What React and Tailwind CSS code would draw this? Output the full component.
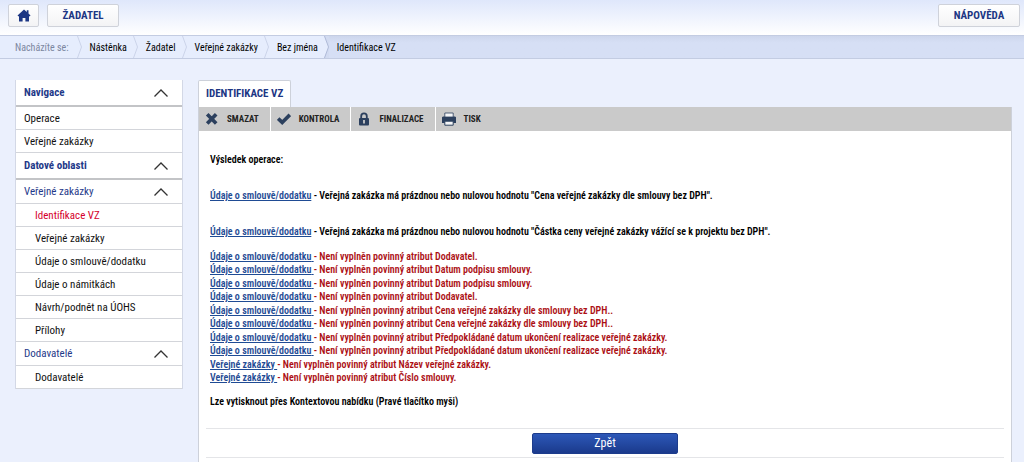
const crumbs = ["Nástěnka", "Žadatel", "Veřejné zakázky", "Bez jména"];

const contractItems = [
  "Identifikace VZ",
  "Veřejné zakázky",
  "Údaje o smlouvě/dodatku",
  "Údaje o námitkách",
  "Návrh/podnět na ÚOHS",
  "Přílohy",
];

const warnings = [
  'Veřejná zakázka má prázdnou nebo nulovou hodnotu "Cena veřejné zakázky dle smlouvy bez DPH".',
  'Veřejná zakázka má prázdnou nebo nulovou hodnotu "Částka ceny veřejné zakázky vážící se k projektu bez DPH".',
];

const errors = [
  ["Údaje o smlouvě/dodatku", "Dodavatel."],
  ["Údaje o smlouvě/dodatku", "Datum podpisu smlouvy."],
  ["Údaje o smlouvě/dodatku", "Datum podpisu smlouvy."],
  ["Údaje o smlouvě/dodatku", "Dodavatel."],
  ["Údaje o smlouvě/dodatku", "Cena veřejné zakázky dle smlouvy bez DPH.."],
  ["Údaje o smlouvě/dodatku", "Cena veřejné zakázky dle smlouvy bez DPH.."],
  ["Údaje o smlouvě/dodatku", "Předpokládané datum ukončení realizace veřejné zakázky."],
  ["Údaje o smlouvě/dodatku", "Předpokládané datum ukončení realizace veřejné zakázky."],
  ["Veřejné zakázky", "Název veřejné zakázky."],
  ["Veřejné zakázky", "Číslo smlouvy."],
];

const topButton =
  "flex h-[23px] items-center justify-center rounded-xs border border-[#cfd2da] bg-linear-to-b from-white to-[#f3f3f5] font-bold text-[#1c3684]";

function CrossIcon() {
  return (
    <svg viewBox="0 0 14 14" className="size-3.5" stroke="#2c405e" strokeWidth="3.6">
      <path d="M2.2 2.2 11.2 11.6M11.2 2.2 2.2 11.6" />
    </svg>
  );
}

function CheckIcon() {
  return (
    <svg viewBox="0 0 14 14" className="size-3.5" fill="none" stroke="#2c405e" strokeWidth="3.6">
      <path d="M1.2 6.6 5.2 10.4 12.8 2.8" />
    </svg>
  );
}

function LockIcon() {
  return (
    <svg viewBox="0 0 14 14" className="size-3.5" fill="none">
      <path d="M4.2 7V4.2a2.8 2.8 0 0 1 5.6 0V7" stroke="#2c405e" strokeWidth="1.8" />
      <rect x="2" y="6" width="10" height="7.4" rx="1" fill="#2c405e" />
      <path d="M7 8v3.4" stroke="#cacaca" strokeWidth="1.8" />
    </svg>
  );
}

function PrintIcon() {
  return (
    <svg viewBox="0 0 14 14" className="size-3.5" fill="#2c405e">
      <path d="M0 5.2 1 4.4H13l1 .8V11H0z" />
      <path d="M2.8 1h8.4v4H2.8z" fill="#f4f5f7" stroke="#2c405e" strokeWidth=".8" />
      <path d="M2.8 9.2h8.4v4H2.8z" fill="#f4f5f7" stroke="#2c405e" strokeWidth="1" />
    </svg>
  );
}

function Separator({ current }) {
  return (
    <svg viewBox="0 0 5 22" className="h-[22px] w-[5px]" fill="none">
      {current && <path d="M0 0 4.5 11 0 22H5V0z" fill="#d2dbf1" />}
      <path d="M0.5 0 4.5 11 0.5 22" stroke={current ? "#b0bbd8" : "#cbd4e9"} />
    </svg>
  );
}

function SectionHeader({ children, strong }) {
  return (
    <button
      type="button"
      className={`flex w-full items-center justify-between pr-3.5 pl-2 text-left text-[#1f3a8a] ${
        strong
          ? "h-[27px] border-b-2 border-[#c3c4c7] font-bold"
          : "h-6 border-b border-[#d3d5da]"
      }`}
    >
      {children}
      <svg viewBox="0 0 14 8" className="h-2 w-3.5" fill="none" stroke="#333" strokeWidth="1.3">
        <path d="M0.5 7.5 7 1l6.5 6.5" />
      </svg>
    </button>
  );
}

function NavItem({ children, nested, active }) {
  return (
    <a
      href="#"
      className={`flex h-[23px] items-center border-b border-[#d3d5da] pt-px ${
        nested ? "pl-[19px]" : "pl-2"
      } ${active ? "text-[#d5002b]" : "text-[#111]"}`}
    >
      {children}
    </a>
  );
}

function ToolButton({ icon, children, last }) {
  return (
    <button
      type="button"
      className={`flex h-6 items-center gap-2 pr-[11px] pl-1.5 ${
        last ? "" : "border-r border-white"
      }`}
    >
      {icon}
      {children}
    </button>
  );
}

function DataLink({ children }) {
  return (
    <a href="#" className="text-[#1f4b94] underline">
      {children}
    </a>
  );
}

export default function App() {
  return (
    <div className="flex min-h-screen flex-col bg-[#ebf0fd] font-['Roboto_Condensed',Roboto,sans-serif] text-[11px] leading-4 text-black">
      <header className="flex h-[35px] items-start justify-between bg-linear-to-b from-[#dfe7fb] to-white px-1 pt-1">
        <div className="flex gap-2 pl-1">
          <button type="button" aria-label="Domů" className={`${topButton} w-[31px]`}>
            <svg viewBox="0 0 14 13" className="h-[13px] w-[14px]" fill="#1c3684">
              <path d="M7 .5 .5 6.5l1 1L2 7v5.5h3.6V9h2.8v3.5H12V7l.5.5 1-1-2-1.9V1.3H9.8v1.8z" />
            </svg>
          </button>
          <button type="button" className={`${topButton} w-[72px]`}>
            ŽADATEL
          </button>
        </div>
        <button type="button" className={`${topButton} w-[82px]`}>
          NÁPOVĚDA
        </button>
      </header>

      <nav
        aria-label="Drobečková navigace"
        className="h-6 border-y border-[#c3cce2] bg-linear-to-b from-[#cdd6ec] to-[#d6dff5] to-30% text-[10px]"
      >
        <ol className="flex h-[22px] items-center leading-[18px]">
          <li className="flex items-center bg-[#e6edfd] pl-[15px] text-[#7c87a0]">
            <span className="pt-px pr-2">Nacházíte se:</span>
            <Separator />
          </li>
          {crumbs.map((label, i) => (
            <li key={label} className="flex items-center bg-[#e6edfd]">
              <a href="#" className="pt-px pr-1.5 pl-2">
                {label}
              </a>
              <Separator current={i === crumbs.length - 1} />
            </li>
          ))}
          <li className="pt-px pl-2">Identifikace VZ</li>
        </ol>
      </nav>

      <div className="flex grow gap-[15px] pt-[21px] pr-3 pl-[15px]">
        <aside className="w-[168px] shrink-0 self-start border-x border-[#d3d8e6] bg-white">
          <SectionHeader strong>Navigace</SectionHeader>
          <NavItem>Operace</NavItem>
          <NavItem>Veřejné zakázky</NavItem>
          <SectionHeader strong>Datové oblasti</SectionHeader>
          <SectionHeader>Veřejné zakázky</SectionHeader>
          {contractItems.map((item, i) => (
            <NavItem key={item} nested active={i === 0}>
              {item}
            </NavItem>
          ))}
          <SectionHeader>Dodavatelé</SectionHeader>
          <NavItem nested>Dodavatelé</NavItem>
        </aside>

        <main className="flex min-w-0 grow flex-col">
          <h1 className="flex h-[27px] w-fit items-center rounded-t-xs border border-b-0 border-[#cdd1da] bg-white px-[7px] font-bold text-[#1c3684]">
            IDENTIFIKACE VZ
          </h1>
          <div className="grow border-x border-[#cdd1da] bg-white">
            <div className="flex h-6 bg-[#cacaca] text-[9px] font-bold text-[#222]">
              <ToolButton icon={<CrossIcon />}>SMAZAT</ToolButton>
              <ToolButton icon={<CheckIcon />}>KONTROLA</ToolButton>
              <ToolButton icon={<LockIcon />}>FINALIZACE</ToolButton>
              <ToolButton icon={<PrintIcon />} last>
                TISK
              </ToolButton>
            </div>

            <div className="px-[11px] pt-[21px] text-[10px] font-semibold">
              <p>Výsledek operace:</p>
              {warnings.map((text) => (
                <p key={text} className="mt-5">
                  <DataLink>Údaje o smlouvě/dodatku</DataLink> - {text}
                </p>
              ))}
              <ul className="mt-2.5 flex h-[134px] flex-col justify-between leading-[13px] text-[#ac0f14]">
                {errors.map(([link, attribute], i) => (
                  <li key={i}>
                    <DataLink>{link} </DataLink>- Není vyplněn povinný atribut {attribute}
                  </li>
                ))}
              </ul>
              <p className="mt-2.5">Lze vytisknout přes Kontextovou nabídku (Pravé tlačítko myši)</p>
            </div>

            <div className="mx-[7px] mt-[18px] flex h-[30px] items-center justify-center border-y border-[#e4e5e8]">
              <button
                type="button"
                className="h-[21px] w-[146px] rounded-xs border border-[#1d3c8c] bg-linear-to-b from-[#2d58b8] to-[#1b3a8c] text-[12px] text-white"
              >
                Zpět
              </button>
            </div>
          </div>
        </main>
      </div>
    </div>
  );
}
